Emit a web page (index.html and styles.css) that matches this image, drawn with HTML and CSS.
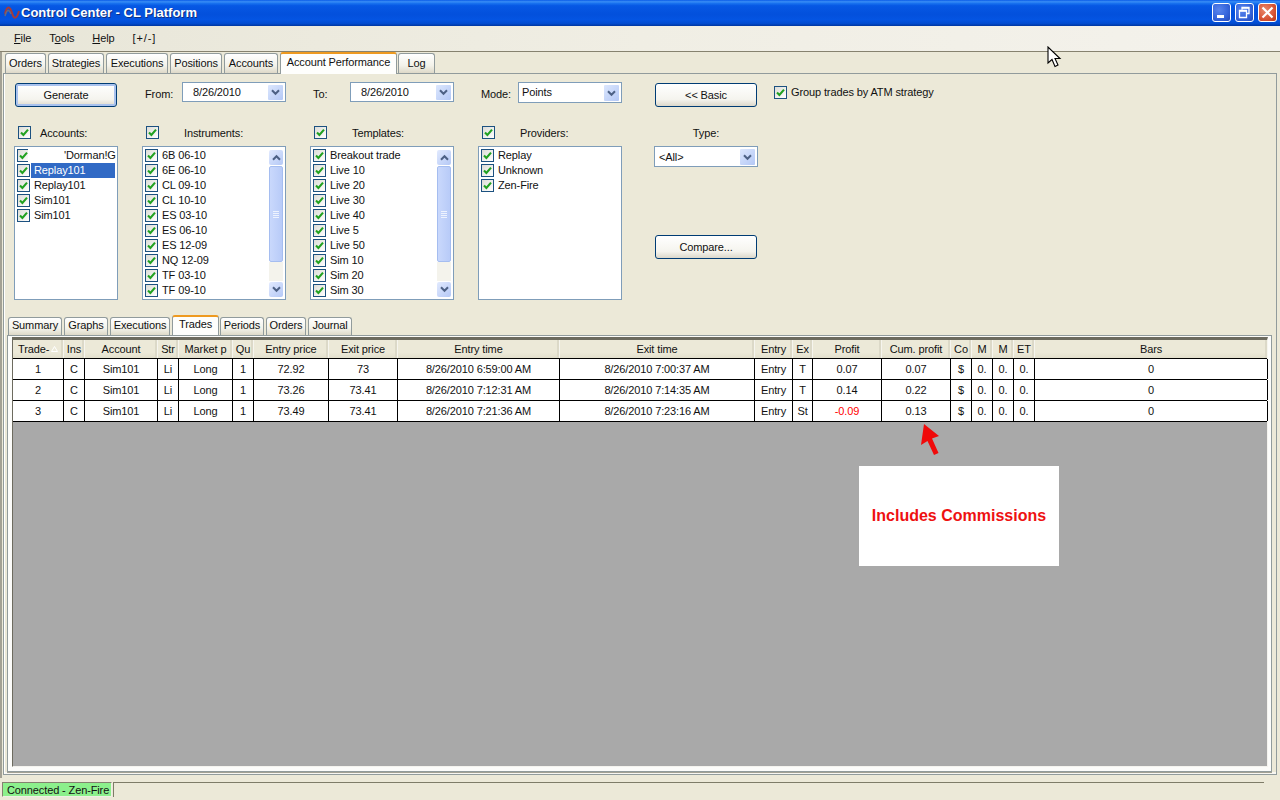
FILE: index.html
```html
<!DOCTYPE html>
<html lang="en">
<head>
<meta charset="utf-8">
<title>Control Center - CL Platform</title>
<link rel="stylesheet" href="styles.css">
</head>
<body>
<svg class="defs" width="0" height="0" aria-hidden="true">
  <symbol id="chk" viewBox="0 0 9 9"><path d="M1 4.5 L3.4 7 L8 1.6" fill="none" stroke="#21a121" stroke-width="2.1"/></symbol>
  <symbol id="chev" viewBox="0 0 9 7"><path d="M1 1.2 L4.5 4.8 L8 1.2" fill="none" stroke="#4d6185" stroke-width="2"/></symbol>
  <symbol id="chevup" viewBox="0 0 9 7"><path d="M1 5.8 L4.5 2.2 L8 5.8" fill="none" stroke="#4d6185" stroke-width="2"/></symbol>
</svg>
<div class="window">
  <header class="titlebar">
    <svg class="appicon" width="16" height="14" viewBox="0 0 16 14"><path d="M1 8 C3 -1 6 0 8 7 C10 14 13 13 15 5" fill="none" stroke="#a83a38" stroke-width="2"/><path d="M1 10 C3 3 5 3 7 8" fill="none" stroke="#666a80" stroke-width="1.4"/></svg>
    <span class="title">Control Center - CL Platform</span>
    <div class="winbtns">
      <span class="winbtn"><svg width="19" height="19" viewBox="0 0 19 19"><rect x="5" y="12" width="7" height="3" fill="#fff"/></svg></span>
      <span class="winbtn"><svg width="19" height="19" viewBox="0 0 19 19"><path d="M7 6.5V4.5H14V10.5H12M4.5 7.5H11.5V14.5H4.5Z" fill="none" stroke="#fff" stroke-width="1.3"/><path d="M4.5 8H11.5M7 5H14" stroke="#fff" stroke-width="1.6"/></svg></span>
      <span class="winbtn close"><svg width="19" height="19" viewBox="0 0 19 19"><path d="M4.5 4.5L14.5 14.5M14.5 4.5L4.5 14.5" stroke="#fff" stroke-width="2.2"/></svg></span>
    </div>
  </header>
  <nav class="menubar">
    <span class="menu"><u>F</u>ile</span>
    <span class="menu">T<u>o</u>ols</span>
    <span class="menu"><u>H</u>elp</span>
    <span class="menu expand">[+/-]</span>
  </nav>
  <main class="workspace">
    <div class="tabs maintabs">
      <span class="tab">Orders</span>
      <span class="tab">Strategies</span>
      <span class="tab">Executions</span>
      <span class="tab">Positions</span>
      <span class="tab">Accounts</span>
      <span class="tab active">Account Performance</span>
      <span class="tab">Log</span>
    </div>
    <section class="panel">
      <div class="form">
        <button class="btn default">Generate</button>
        <div class="field"><label class="lbl-from">From:</label><div class="combo date">8/26/2010<span class="drop"><svg width="9" height="7"><use href="#chev"/></svg></span></div></div>
        <div class="field"><label class="lbl-from">To:</label><div class="combo date">8/26/2010<span class="drop"><svg width="9" height="7"><use href="#chev"/></svg></span></div></div>
        <div class="field"><label class="lbl-mode">Mode:</label><div class="combo mode">Points<span class="drop"><svg width="9" height="7"><use href="#chev"/></svg></span></div></div>
        <button class="btn basic">&lt;&lt; Basic</button>
        <div class="group"><span class="cb"><svg width="9" height="9"><use href="#chk"/></svg></span>Group trades by ATM strategy</div>

        <div class="col">
          <div class="colhead"><span class="cb"><svg width="9" height="9"><use href="#chk"/></svg></span><span class="cap cap-acc">Accounts:</span></div>
          <div class="list acc">
            <div class="item"><span class="cb"><svg width="9" height="9"><use href="#chk"/></svg></span><span class="redact"></span><span class="clip">'Dorman!G</span></div>
            <div class="item"><span class="cb"><svg width="9" height="9"><use href="#chk"/></svg></span><span class="txt sel">Replay101</span></div>
            <div class="item"><span class="cb"><svg width="9" height="9"><use href="#chk"/></svg></span><span class="txt">Replay101</span></div>
            <div class="item"><span class="cb"><svg width="9" height="9"><use href="#chk"/></svg></span><span class="txt">Sim101</span></div>
            <div class="item"><span class="cb"><svg width="9" height="9"><use href="#chk"/></svg></span><span class="txt">Sim101</span></div>
          </div>
        </div>
        <div class="col">
          <div class="colhead"><span class="cb"><svg width="9" height="9"><use href="#chk"/></svg></span><span class="cap cap-ins">Instruments:</span></div>
          <div class="list">
            <div class="items">
              <div class="item"><span class="cb"><svg width="9" height="9"><use href="#chk"/></svg></span><span class="txt">6B 06-10</span></div>
              <div class="item"><span class="cb"><svg width="9" height="9"><use href="#chk"/></svg></span><span class="txt">6E 06-10</span></div>
              <div class="item"><span class="cb"><svg width="9" height="9"><use href="#chk"/></svg></span><span class="txt">CL 09-10</span></div>
              <div class="item"><span class="cb"><svg width="9" height="9"><use href="#chk"/></svg></span><span class="txt">CL 10-10</span></div>
              <div class="item"><span class="cb"><svg width="9" height="9"><use href="#chk"/></svg></span><span class="txt">ES 03-10</span></div>
              <div class="item"><span class="cb"><svg width="9" height="9"><use href="#chk"/></svg></span><span class="txt">ES 06-10</span></div>
              <div class="item"><span class="cb"><svg width="9" height="9"><use href="#chk"/></svg></span><span class="txt">ES 12-09</span></div>
              <div class="item"><span class="cb"><svg width="9" height="9"><use href="#chk"/></svg></span><span class="txt">NQ 12-09</span></div>
              <div class="item"><span class="cb"><svg width="9" height="9"><use href="#chk"/></svg></span><span class="txt">TF 03-10</span></div>
              <div class="item"><span class="cb"><svg width="9" height="9"><use href="#chk"/></svg></span><span class="txt">TF 09-10</span></div>
            </div>
            <div class="scroll">
              <span class="sbtn"><svg width="9" height="7"><use href="#chevup"/></svg></span>
              <span class="thumb"><i></i><i></i><i></i><i></i></span>
              <span class="track"></span>
              <span class="sbtn"><svg width="9" height="7"><use href="#chev"/></svg></span>
            </div>
          </div>
        </div>
        <div class="col">
          <div class="colhead"><span class="cb"><svg width="9" height="9"><use href="#chk"/></svg></span><span class="cap cap-tpl">Templates:</span></div>
          <div class="list">
            <div class="items">
              <div class="item"><span class="cb"><svg width="9" height="9"><use href="#chk"/></svg></span><span class="txt">Breakout trade</span></div>
              <div class="item"><span class="cb"><svg width="9" height="9"><use href="#chk"/></svg></span><span class="txt">Live 10</span></div>
              <div class="item"><span class="cb"><svg width="9" height="9"><use href="#chk"/></svg></span><span class="txt">Live 20</span></div>
              <div class="item"><span class="cb"><svg width="9" height="9"><use href="#chk"/></svg></span><span class="txt">Live 30</span></div>
              <div class="item"><span class="cb"><svg width="9" height="9"><use href="#chk"/></svg></span><span class="txt">Live 40</span></div>
              <div class="item"><span class="cb"><svg width="9" height="9"><use href="#chk"/></svg></span><span class="txt">Live 5</span></div>
              <div class="item"><span class="cb"><svg width="9" height="9"><use href="#chk"/></svg></span><span class="txt">Live 50</span></div>
              <div class="item"><span class="cb"><svg width="9" height="9"><use href="#chk"/></svg></span><span class="txt">Sim 10</span></div>
              <div class="item"><span class="cb"><svg width="9" height="9"><use href="#chk"/></svg></span><span class="txt">Sim 20</span></div>
              <div class="item"><span class="cb"><svg width="9" height="9"><use href="#chk"/></svg></span><span class="txt">Sim 30</span></div>
            </div>
            <div class="scroll">
              <span class="sbtn"><svg width="9" height="7"><use href="#chevup"/></svg></span>
              <span class="thumb"><i></i><i></i><i></i><i></i></span>
              <span class="track"></span>
              <span class="sbtn"><svg width="9" height="7"><use href="#chev"/></svg></span>
            </div>
          </div>
        </div>
        <div class="col">
          <div class="colhead"><span class="cb"><svg width="9" height="9"><use href="#chk"/></svg></span><span class="cap cap-tpl">Providers:</span></div>
          <div class="list">
            <div class="items">
              <div class="item"><span class="cb"><svg width="9" height="9"><use href="#chk"/></svg></span><span class="txt">Replay</span></div>
              <div class="item"><span class="cb"><svg width="9" height="9"><use href="#chk"/></svg></span><span class="txt">Unknown</span></div>
              <div class="item"><span class="cb"><svg width="9" height="9"><use href="#chk"/></svg></span><span class="txt">Zen-Fire</span></div>
            </div>
          </div>
        </div>
        <div class="typecol">
          <div class="typehead">Type:</div>
          <div class="combo type">&lt;All&gt;<span class="drop"><svg width="9" height="7"><use href="#chev"/></svg></span></div>
          <button class="btn compare">Compare...</button>
        </div>
      </div>

      <div class="tabs subtabs">
        <span class="tab">Summary</span>
        <span class="tab">Graphs</span>
        <span class="tab">Executions</span>
        <span class="tab active">Trades</span>
        <span class="tab">Periods</span>
        <span class="tab">Orders</span>
        <span class="tab">Journal</span>
      </div>
      <section class="subpanel">
        <div class="grid">
          <div class="row head">
            <span class="hc sorted">Trade-<svg class="sort" width="7" height="6"><path d="M3.5 0.5L6.5 5.5H0.5Z" fill="none" stroke="#fff"/></svg></span><span class="hc">Ins</span><span class="hc">Account</span><span class="hc">Str</span><span class="hc">Market p</span><span class="hc">Qu</span><span class="hc">Entry price</span><span class="hc">Exit price</span><span class="hc">Entry time</span><span class="hc">Exit time</span><span class="hc">Entry</span><span class="hc">Ex</span><span class="hc">Profit</span><span class="hc">Cum. profit</span><span class="hc">Co</span><span class="hc">M</span><span class="hc">M</span><span class="hc">ET</span><span class="hc">Bars</span>
          </div>
          <div class="row">
            <span class="c">1</span><span class="c">C</span><span class="c">Sim101</span><span class="c">Li</span><span class="c">Long</span><span class="c">1</span><span class="c">72.92</span><span class="c">73</span><span class="c">8/26/2010 6:59:00 AM</span><span class="c">8/26/2010 7:00:37 AM</span><span class="c">Entry</span><span class="c">T</span><span class="c">0.07</span><span class="c">0.07</span><span class="c">$</span><span class="c">0.</span><span class="c">0.</span><span class="c">0.</span><span class="c">0</span>
          </div>
          <div class="row">
            <span class="c">2</span><span class="c">C</span><span class="c">Sim101</span><span class="c">Li</span><span class="c">Long</span><span class="c">1</span><span class="c">73.26</span><span class="c">73.41</span><span class="c">8/26/2010 7:12:31 AM</span><span class="c">8/26/2010 7:14:35 AM</span><span class="c">Entry</span><span class="c">T</span><span class="c">0.14</span><span class="c">0.22</span><span class="c">$</span><span class="c">0.</span><span class="c">0.</span><span class="c">0.</span><span class="c">0</span>
          </div>
          <div class="row">
            <span class="c">3</span><span class="c">C</span><span class="c">Sim101</span><span class="c">Li</span><span class="c">Long</span><span class="c">1</span><span class="c">73.49</span><span class="c">73.41</span><span class="c">8/26/2010 7:21:36 AM</span><span class="c">8/26/2010 7:23:16 AM</span><span class="c">Entry</span><span class="c">St</span><span class="c neg">-0.09</span><span class="c">0.13</span><span class="c">$</span><span class="c">0.</span><span class="c">0.</span><span class="c">0.</span><span class="c">0</span>
          </div>
        </div>
      </section>
    </section>
  </main>
  <footer class="statusbar">
    <span class="connected">Connected - Zen-Fire</span>
    <span class="statusrest"></span>
  </footer>
</div>

<svg class="annot-arrow" width="22" height="34" viewBox="0 0 22 34"><path d="M4 1L1 22L7.5 18L14 32L18.5 30L12 15.5L19 13Z" fill="#f00a0a"/></svg>
<div class="callout">Includes Commissions</div>
<svg class="cursor" width="15" height="23" viewBox="0 0 15 23"><path d="M1 1V17L5 13.5L8 20.5L11 19L8 12.5H13Z" fill="#fff" stroke="#000" stroke-width="1.1"/></svg>
</body>
</html>
```
FILE: styles.css
```css
* { box-sizing: border-box; }
html, body { margin: 0; height: 100%; overflow: hidden; }
body { background: #ece9d8; font: 11px/15px "Liberation Sans", Arial, sans-serif; letter-spacing: -0.12px; color: #111; }
.defs { position: absolute; }
.window { height: 800px; display: flex; flex-direction: column; }

/* Title bar */
.titlebar {
  height: 26px; flex: none; display: flex; align-items: center; padding: 0 3px 1px 4px;
  background: linear-gradient(#0a5be8 0, #3a8ff5 7%, #1a74f0 12%, #0658e4 22%, #0350dc 55%, #0454e2 75%, #024cd0 90%, #0036a0 100%);
}
.appicon { flex: none; }
.title { margin-left: 1px; color: #fff; font: bold 13px/16px "Liberation Sans", Arial, sans-serif; letter-spacing: 0; text-shadow: 1px 1px 0 #0f2f80; }
.winbtns { margin-left: auto; display: flex; gap: 4px; }
.winbtn { width: 19px; height: 19px; border: 1px solid #fff; border-radius: 3px; background: radial-gradient(circle at 35% 35%, #5a85ec 0, #3766dc 55%, #2448b8 100%); display: block; overflow: hidden; }
.winbtn svg { display: block; margin: -1px; }
.winbtn.close { background: radial-gradient(circle at 35% 35%, #e98a6c 0, #d9583a 55%, #b93412 100%); }

/* Menu */
.menubar {
  height: 26px; flex: none; display: flex; align-items: center; padding: 0 0 1px 14px; gap: 18px;
  background: linear-gradient(90deg, #e8e6d8 0, #f0eee4 50%, #f4f2ec 100%);
  border-bottom: 1px solid #86826f;
}
.menu { display: block; }
.expand { letter-spacing: 0.9px; }

/* Workspace */
.workspace { flex: 1; min-height: 0; display: flex; flex-direction: column; padding: 0 3px 3px 1px; border-left: 2px solid #a3a194; }
.tabs { display: grid; flex: none; }
.maintabs { height: 21px; padding-left: 2px; grid-template-columns: 43px 58px 64px 54px 56px 118px 37px; }
.subtabs { height: 19px; margin: 16px 0 0 4px; grid-template-columns: 56px 46px 62px 48px 46px 42px 44px; position: relative; z-index: 1; }
.tab {
  display: block; margin: 1px 2px 0 0; border: 1px solid #919b9c; border-bottom: 0; border-radius: 3px 3px 0 0;
  background: linear-gradient(#fff, #f3f2ea 60%, #ded9c8); text-align: center; line-height: 18px; white-space: nowrap;
}
.maintabs .tab { height: 20px; }
.maintabs .tab:last-child { margin-right: 0; }
.subtabs .tab { height: 18px; line-height: 15px; }
.subtabs .tab:last-child { margin-right: 0; }
.tab.active {
  margin: 0; height: auto; background: #fefefc; border-top: 2px solid #ee9a20; border-left-color: #919b9c; line-height: 16px;
  position: relative; z-index: 2;
}
.maintabs .tab.active { height: 22px; margin: 0 1px -1px 0; }
.subtabs .tab.active { height: 20px; margin: -1px 1px -1px 0; line-height: 15px; }

.panel { flex: 1; min-height: 0; display: flex; flex-direction: column; border: 1px solid #919b9c; box-shadow: inset 1px 0 0 #fff, inset 0 -2px 0 #f8f7f2; background: #ece9d8; padding-bottom: 2px; }

/* Form */
.form {
  flex: none; margin: 8px 0 0 10px; display: grid;
  grid-template-columns: 104px 144px 144px 144px 112px auto;
  grid-template-rows: 25px 174px;
  column-gap: 24px; row-gap: 19px; justify-content: start;
}
.btn {
  display: block; width: 102px; height: 24px; margin: 1px 0 0 1px; padding: 0; border: 1px solid #003c74; border-radius: 3px;
  background: linear-gradient(#fff, #f5f4ee 70%, #dcd8cb); font: inherit; letter-spacing: inherit; color: #111; text-align: center;
}
.btn.default { box-shadow: inset 0 0 0 2px #a9c2ee; }
.btn.basic { margin-left: 9px; }
.field { display: flex; }
.field label { padding-top: 5px; flex: none; }
.lbl-from { width: 40px; padding-left: 3px; }
.lbl-mode { width: 40px; padding-left: 3px; }
.combo { position: relative; height: 20px; flex: 1; background: #fff; border: 1px solid #7f9db9; padding: 2px 0 0 10px; }
.mode { height: 21px; padding-left: 3px; }
.type { height: 21px; flex: none; padding: 3px 0 0 4px; }
.drop {
  position: absolute; right: 2px; top: 2px; width: 15px; height: 15px; border-radius: 1px;
  background: linear-gradient(135deg, #dce7fd, #b4c8f6); display: flex; align-items: center; justify-content: center;
}
.mode .drop, .type .drop { height: 16px; }
.drop svg, .sbtn svg { display: block; }
.group { display: flex; align-items: flex-start; margin: 4px 0 0 -8px; white-space: nowrap; line-height: 12px; }
.group .cb { margin-right: 4px; }
.cb {
  flex: none; width: 13px; height: 13px; border: 1px solid #1c5180; background: linear-gradient(135deg, #dcdcd7, #fff);
  display: flex; align-items: center; justify-content: center;
}
.cb svg { display: block; }

.col { display: flex; flex-direction: column; min-width: 0; }
.colhead { height: 20px; flex: none; display: flex; align-items: flex-start; padding-left: 4px; }
.cap { line-height: 15px; }
.cap-acc { margin-left: 9px; }
.cap-ins { margin-left: 25px; }
.cap-tpl { margin-left: 25px; }
.list { height: 154px; border: 1px solid #7f9db9; background: #fff; display: flex; padding: 1px 1px 2px 2px; }
.items { flex: 1; min-width: 0; }
.acc { display: block; }
.item { height: 15px; display: flex; align-items: center; }
.txt { margin-left: 1px; padding: 0 3px; flex: 1; line-height: 15px; white-space: nowrap; }
.sel { background: #316ac5; color: #fff; margin-right: 1px; }
.redact { flex: none; width: 36px; height: 15px; margin-left: -2px; background: #fff; position: relative; }
.clip { white-space: nowrap; overflow: hidden; }
.scroll { width: 16px; flex: none; display: flex; flex-direction: column; padding: 2px 1px 0; }
.sbtn { height: 15px; flex: none; border-radius: 2px; background: linear-gradient(135deg, #e2eafe, #b4c8f6); display: flex; align-items: center; justify-content: center; }
.thumb { height: 96px; flex: none; margin-top: 1px; border: 1px solid #a5bdf0; border-radius: 2px; background: linear-gradient(90deg, #c9d8fc, #b8cbf8); display: flex; flex-direction: column; align-items: center; justify-content: center; gap: 1px; }
.thumb i { display: block; width: 6px; height: 1px; background: #eef3fe; }
.track { flex: 1; background: #f4f3ec; margin-bottom: 1px; }

.typecol { display: flex; flex-direction: column; margin-left: 8px; width: 104px; }
.typehead { height: 20px; text-align: center; flex: none; }
.compare { margin-top: 68px; }

/* Grid */
.subpanel { flex: 1; min-height: 0; margin: 0 4px 0 3px; border: 1px solid #919b9c; background: #fcfcfa; padding: 1px 3px 4px 4px; display: flex; box-shadow: 0 1px 0 #a3a194; }
.grid { flex: 1; min-width: 0; background: #a9a9a9; border: 1px solid #fff; border-width: 3px 1px 1px 1px; border-color: #6d6b5f #f4f3ee #f4f3ee #6d6b5f; }
.row {
  display: grid; height: 21px; background: #fff; border-bottom: 1px solid #000;
  grid-template-columns: 51px 21px 73px 21px 54px 21px 75px 69px 162px 195px 38px 20px 69px 69px 21px 21px 21px 21px 233px;
}
.row.head { height: 19px; background: linear-gradient(#ece9d8 70%, #e2dfcc); }
.c, .hc { display: block; text-align: center; overflow: hidden; white-space: nowrap; }
.c { border-right: 1px solid #000; line-height: 20px; }
.hc { line-height: 18px; border-right: 1px solid #f6f5ee; position: relative; box-shadow: inset -2px 0 0 #dcd9c8; }
.sorted { text-align: left; padding-left: 5px; }
.sort { position: absolute; right: 5px; top: 6px; }
.neg { color: #f00; }

/* Status */
.statusbar { height: 22px; flex: none; display: flex; padding: 4px 16px 3px 2px; gap: 1px; }
.connected { width: 110px; background: #8cf08c; border: 1px solid #f0efe4; border-top-color: #84826f; border-left-color: #84826f; line-height: 14px; padding-left: 4px; white-space: nowrap; }
.statusrest { flex: 1; border-top: 1px solid #7e7c68; border-left: 1px solid #7e7c68; }

/* Overlays */
.annot-arrow { position: absolute; left: 920px; top: 423px; }
.callout { position: absolute; left: 859px; top: 466px; width: 200px; height: 100px; background: #fff; color: #ee1111; font: bold 16px/100px "Liberation Sans", Arial, sans-serif; letter-spacing: 0; text-align: center; }
.cursor { position: absolute; left: 1047px; top: 46px; }
```
